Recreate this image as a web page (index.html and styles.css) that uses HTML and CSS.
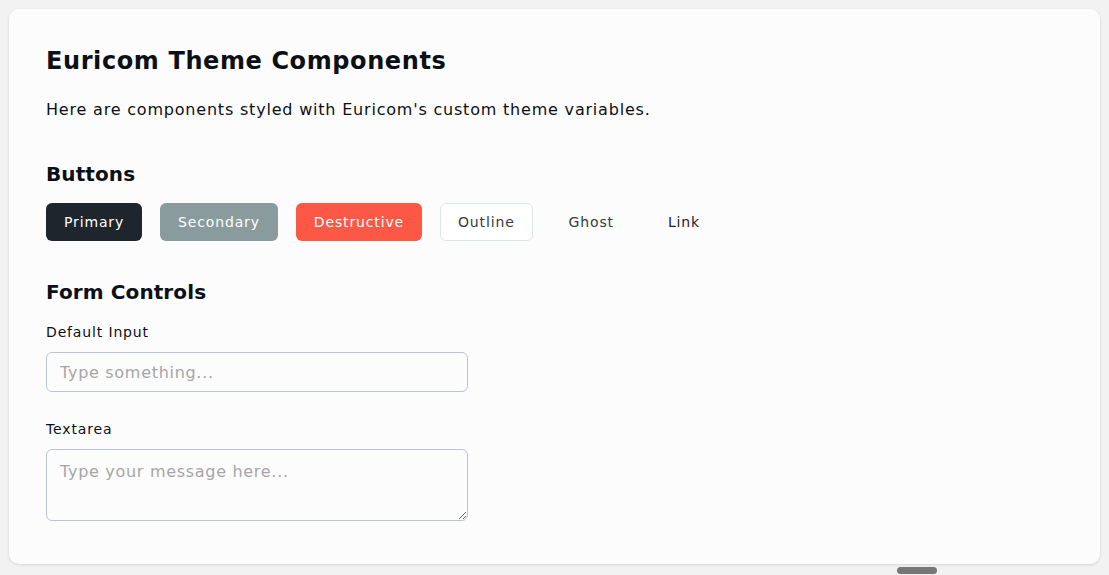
FILE: index.html
```html
<!DOCTYPE html>
<html lang="en">
<head>
<meta charset="utf-8">
<title>Euricom Theme Components</title>
<link rel="stylesheet" href="styles.css">
</head>
<body>
<main class="card">
  <h1 class="title">Euricom Theme Components</h1>
  <p class="lead">Here are components styled with Euricom's custom theme variables.</p>

  <section class="section">
    <h2 class="section-title">Buttons</h2>
    <div class="button-row">
      <button class="btn btn-primary">Primary</button>
      <button class="btn btn-secondary">Secondary</button>
      <button class="btn btn-destructive">Destructive</button>
      <button class="btn btn-outline">Outline</button>
      <button class="btn btn-ghost">Ghost</button>
      <button class="btn btn-link">Link</button>
    </div>
  </section>

  <section class="section section-form">
    <h2 class="section-title">Form Controls</h2>
    <div class="field">
      <label class="label" for="inp">Default Input</label>
      <input id="inp" class="input" type="text" placeholder="Type something...">
    </div>
    <div class="field">
      <label class="label" for="ta">Textarea</label>
      <textarea id="ta" class="input textarea" placeholder="Type your message here..."></textarea>
    </div>
  </section>
</main>
<div class="scroll-thumb"></div>
</body>
</html>
```
FILE: styles.css
```css
html, body {
  margin: 0;
  padding: 0;
}
body {
  background: #f2f2f2;
  font-family: "DejaVu Sans", Inter, sans-serif;
  color: #0b1016;
  padding: 9px 9px 11px 9px;
  height: 575px;
  box-sizing: border-box;
  overflow: hidden;
}
.card {
  background: #fcfcfc;
  border-radius: 10px;
  box-shadow: 0 1px 3px rgba(0,0,0,0.12);
  padding: 36px 37px 40px 37px;
  height: 555px;
  box-sizing: border-box;
}
.title {
  margin: 0;
  font-size: 24px;
  line-height: 32px;
  font-weight: 700;
  letter-spacing: 0.6px;
}
.lead {
  margin: 21px 0 0;
  font-size: 16px;
  line-height: 24px;
  font-weight: 400;
  letter-spacing: 0.8px;
}
.section {
  margin-top: 38px;
}
.section-form {
  margin-top: 37px;
}
.section-title {
  margin: 0 0 15px;
  font-size: 20px;
  line-height: 28px;
  font-weight: 700;
  letter-spacing: 0.1px;
}
.section-form .section-title {
  margin-bottom: 16px;
}
.button-row {
  display: flex;
  gap: 18px;
}
.btn {
  font-family: inherit;
  font-size: 14px;
  font-weight: 400;
  letter-spacing: 0.85px;
  height: 38px;
  padding: 0 17px;
  border-radius: 6px;
  border: 1px solid transparent;
  cursor: pointer;
}
.btn-primary { background: #1e252d; color: #fff; }
.btn-secondary { background: #8a9b9e; color: #fff; }
.btn-destructive { background: #fd5745; color: #fff; }
.btn-outline { background: #fff; color: #333a40; border-color: #dde5e5; }
.btn-ghost { background: transparent; color: #333a40; }
.btn-link { background: transparent; color: #1b2128; }
.field {
  display: flex;
  flex-direction: column;
  gap: 10px;
  width: 422px;
}
.field + .field {
  margin-top: 27px;
}
.label {
  font-size: 14px;
  line-height: 20px;
  font-weight: 400;
  letter-spacing: 0.85px;
}
.input {
  font-family: inherit;
  font-size: 16px;
  letter-spacing: 0.7px;
  height: 40px;
  padding: 0 13px;
  border: 1px solid #b9c4d3;
  border-radius: 6px;
  background: #fcfcfc;
  color: #0b1016;
  box-sizing: border-box;
}
.input::placeholder { color: #a6a6a6; }
.textarea {
  height: 72px;
  padding: 12px 13px 10px;
  resize: vertical;
}
.scroll-thumb {
  position: absolute;
  left: 897px;
  top: 567px;
  width: 40px;
  height: 7px;
  border-radius: 4px;
  background: #777;
}
```
